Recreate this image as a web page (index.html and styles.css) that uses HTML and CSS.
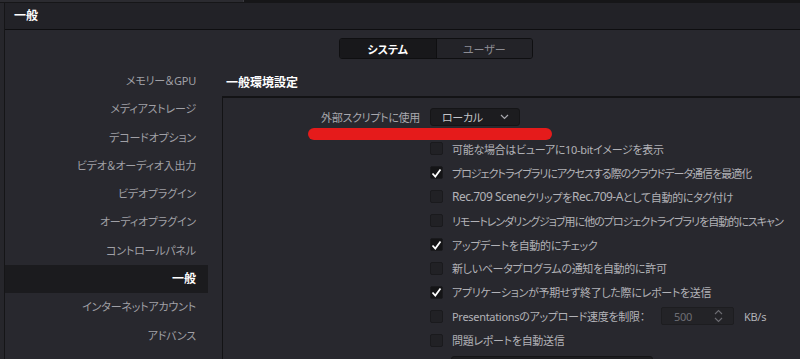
FILE: index.html
```html
<!DOCTYPE html>
<html lang="ja">
<head>
<meta charset="UTF-8">
<meta name="viewport" content="width=device-width, initial-scale=1.0">
<title>環境設定</title>
<link rel="stylesheet" href="styles.css">
</head>
<body>
  <div class="topstrip"><div class="topstrip-left"></div></div>
  <div class="window">
    <div class="titlebar">一般</div>
    <div class="body">
      <div class="tabs">
        <button class="tab active">システム</button>
        <button class="tab">ユーザー</button>
      </div>
      <div class="main">
        <ul class="sidebar">
          <li>メモリー＆GPU</li>
          <li>メディアストレージ</li>
          <li>デコードオプション</li>
          <li>ビデオ＆オーディオ入出力</li>
          <li>ビデオプラグイン</li>
          <li>オーディオプラグイン</li>
          <li>コントロールパネル</li>
          <li class="selected">一般</li>
          <li>インターネットアカウント</li>
          <li>アドバンス</li>
        </ul>
        <section class="content">
          <h2>一般環境設定</h2>
          <div class="panel">
            <div class="field-row">
              <label>外部スクリプトに使用</label>
              <div class="select">
                <span>ローカル</span>
                <svg width="9" height="6" viewBox="0 0 9 6"><path d="M1 1l3.5 3.5L8 1" fill="none" stroke="#a8a8ae" stroke-width="1.2"/></svg>
              </div>
            </div>
            <ul class="checks">
              <li><span class="box"></span>可能な場合はビューアに10-bitイメージを表示</li>
              <li class="tight"><span class="box checked"><svg width="11" height="10" viewBox="0 0 11 10"><path d="M1.5 5.5l2.8 3L9.5 1.5" fill="none" stroke="#fff" stroke-width="1.8"/></svg></span>プロジェクトライブラリにアクセスする際のクラウドデータ通信を最適化</li>
              <li><span class="box"></span><span class="lat">Rec.709 Scene</span>クリップを<span class="lat">Rec.709-A</span>として自動的にタグ付け</li>
              <li class="tight"><span class="box"></span>リモートレンダリングジョブ用に他のプロジェクトライブラリを自動的にスキャン</li>
              <li><span class="box checked"><svg width="11" height="10" viewBox="0 0 11 10"><path d="M1.5 5.5l2.8 3L9.5 1.5" fill="none" stroke="#fff" stroke-width="1.8"/></svg></span>アップデートを自動的にチェック</li>
              <li><span class="box"></span>新しいベータプログラムの通知を自動的に許可</li>
              <li><span class="box checked"><svg width="11" height="10" viewBox="0 0 11 10"><path d="M1.5 5.5l2.8 3L9.5 1.5" fill="none" stroke="#fff" stroke-width="1.8"/></svg></span>アプリケーションが予期せず終了した際にレポートを送信</li>
              <li>
                <span class="box"></span><span class="limit-label">Presentationsのアップロード速度を制限：</span>
                <div class="spin">
                  <span>500</span>
                  <svg width="9" height="16" viewBox="0 0 9 16"><path d="M1 6l3.5-3.5L8 6M1 10l3.5 3.5L8 10" fill="none" stroke="#6c6c72" stroke-width="1.1"/></svg>
                </div>
                <span class="unit">KB/s</span>
              </li>
              <li><span class="box"></span>問題レポートを自動送信</li>
            </ul>
            <div class="subfield"></div>
          </div>
        </section>
      </div>
    </div>
  </div>
  <div class="annotation"></div>
</body>
</html>
```
FILE: styles.css
```css
body {
  margin: 0;
  background-color: #26262b;
  font-family: "Noto Sans", "Noto Sans CJK JP", sans-serif;
  font-size: 11px;
  font-feature-settings: "palt";
  letter-spacing: -0.3px;
  color: #b2b2b7;
  height: 359px;
  overflow: hidden;
  position: relative;
}

.topstrip {
  height: 3px;
  background-color: #161618;
}

.topstrip-left {
  width: 243px;
  height: 2px;
  background-color: #2b2b30;
  border-right: 1px solid #3a3a3f;
}

.window {
  margin-left: 4px;
  border-left: 1px solid #151517;
  background-color: #28282e;
  height: 356px;
  overflow: hidden;
}

.titlebar {
  height: 26px;
  line-height: 26px;
  padding-left: 9px;
  background-color: #222227;
  border-bottom: 1px solid #0e0e10;
  color: #fff;
  font-size: 12px;
  font-weight: bold;
  letter-spacing: 0;
}

.tabs {
  display: flex;
  margin: 8px 0 0 334px;
  width: 192px;
  height: 19px;
  border: 1px solid #0f0f11;
  border-radius: 3px;
  overflow: hidden;
}

.tab {
  flex: 1;
  border: none;
  padding: 0;
  font: inherit;
  font-feature-settings: "palt";
  letter-spacing: 0;
  background-color: #232328;
  color: #8c8c93;
}

.tab.active {
  background-color: #18181b;
  color: #fff;
  font-weight: bold;
  border-right: 1px solid #0f0f11;
}

.main {
  display: flex;
  margin-top: 8px;
}

.sidebar {
  list-style: none;
  margin: 0;
  padding: 0;
  width: 203px;
  flex-shrink: 0;
}

.sidebar li {
  height: 28.3px;
  line-height: 28.3px;
  text-align: right;
  padding-right: 12px;
  color: #a0a0a6;
  letter-spacing: -0.2px;
}

.sidebar li.selected {
  background-color: #1b1b1e;
  color: #fff;
  font-weight: bold;
  font-size: 12px;
  letter-spacing: 0;
}

.content {
  margin-left: 14px;
  flex: 1;
}

.content h2 {
  margin: 8px 0 5px 4px;
  font-size: 12px;
  line-height: 16px;
  letter-spacing: 0;
  color: #fff;
}

.panel {
  border-top: 2px solid #131315;
  border-left: 1px solid #131315;
  padding-top: 10px;
  height: 300px;
}

.field-row {
  display: flex;
  align-items: center;
}

.field-row label {
  width: 197px;
  text-align: right;
  color: #a8a8ae;
}

.select {
  margin-left: 10px;
  width: 90px;
  height: 18px;
  box-sizing: border-box;
  display: flex;
  align-items: center;
  justify-content: space-between;
  padding: 0 10px 0 11px;
  background-color: #1c1c1f;
  border: 1px solid #151517;
  border-radius: 3px;
  color: #c4c4c8;
}

.checks {
  list-style: none;
  margin: 11px 0 0 0;
  padding: 0 0 0 207px;
}

.checks li {
  height: 23.9px;
  display: flex;
  align-items: center;
  white-space: nowrap;
}

.checks li.tight {
  letter-spacing: -1px;
}

.lat {
  font-size: 12px;
  letter-spacing: -0.5px;
}

.box {
  width: 13px;
  height: 13px;
  box-sizing: border-box;
  margin-right: 9px;
  background-color: #212125;
  border: 1px solid #1a1a1d;
  border-radius: 2px;
  display: flex;
  align-items: center;
  justify-content: center;
  flex-shrink: 0;
}

.box.checked {
  background-color: #141416;
}

.limit-label {
  width: 196px;
}

.spin {
  margin-left: 13px;
  width: 73px;
  height: 18px;
  box-sizing: border-box;
  display: flex;
  align-items: center;
  justify-content: space-between;
  padding: 0 10px 0 12px;
  background-color: #232327;
  border: 1px solid #1d1d20;
  border-radius: 2px;
  color: #6e6e74;
}

.unit {
  margin-left: 10px;
}

.subfield {
  margin: 4px 0 0 228px;
  width: 200px;
  height: 20px;
  background-color: #1d1d20;
  border: 1px solid #151517;
  border-radius: 3px;
}

.annotation {
  position: absolute;
  left: 308px;
  top: 128px;
  width: 244px;
  height: 12px;
  border-radius: 6px;
  background-color: #e51b1b;
}
```
